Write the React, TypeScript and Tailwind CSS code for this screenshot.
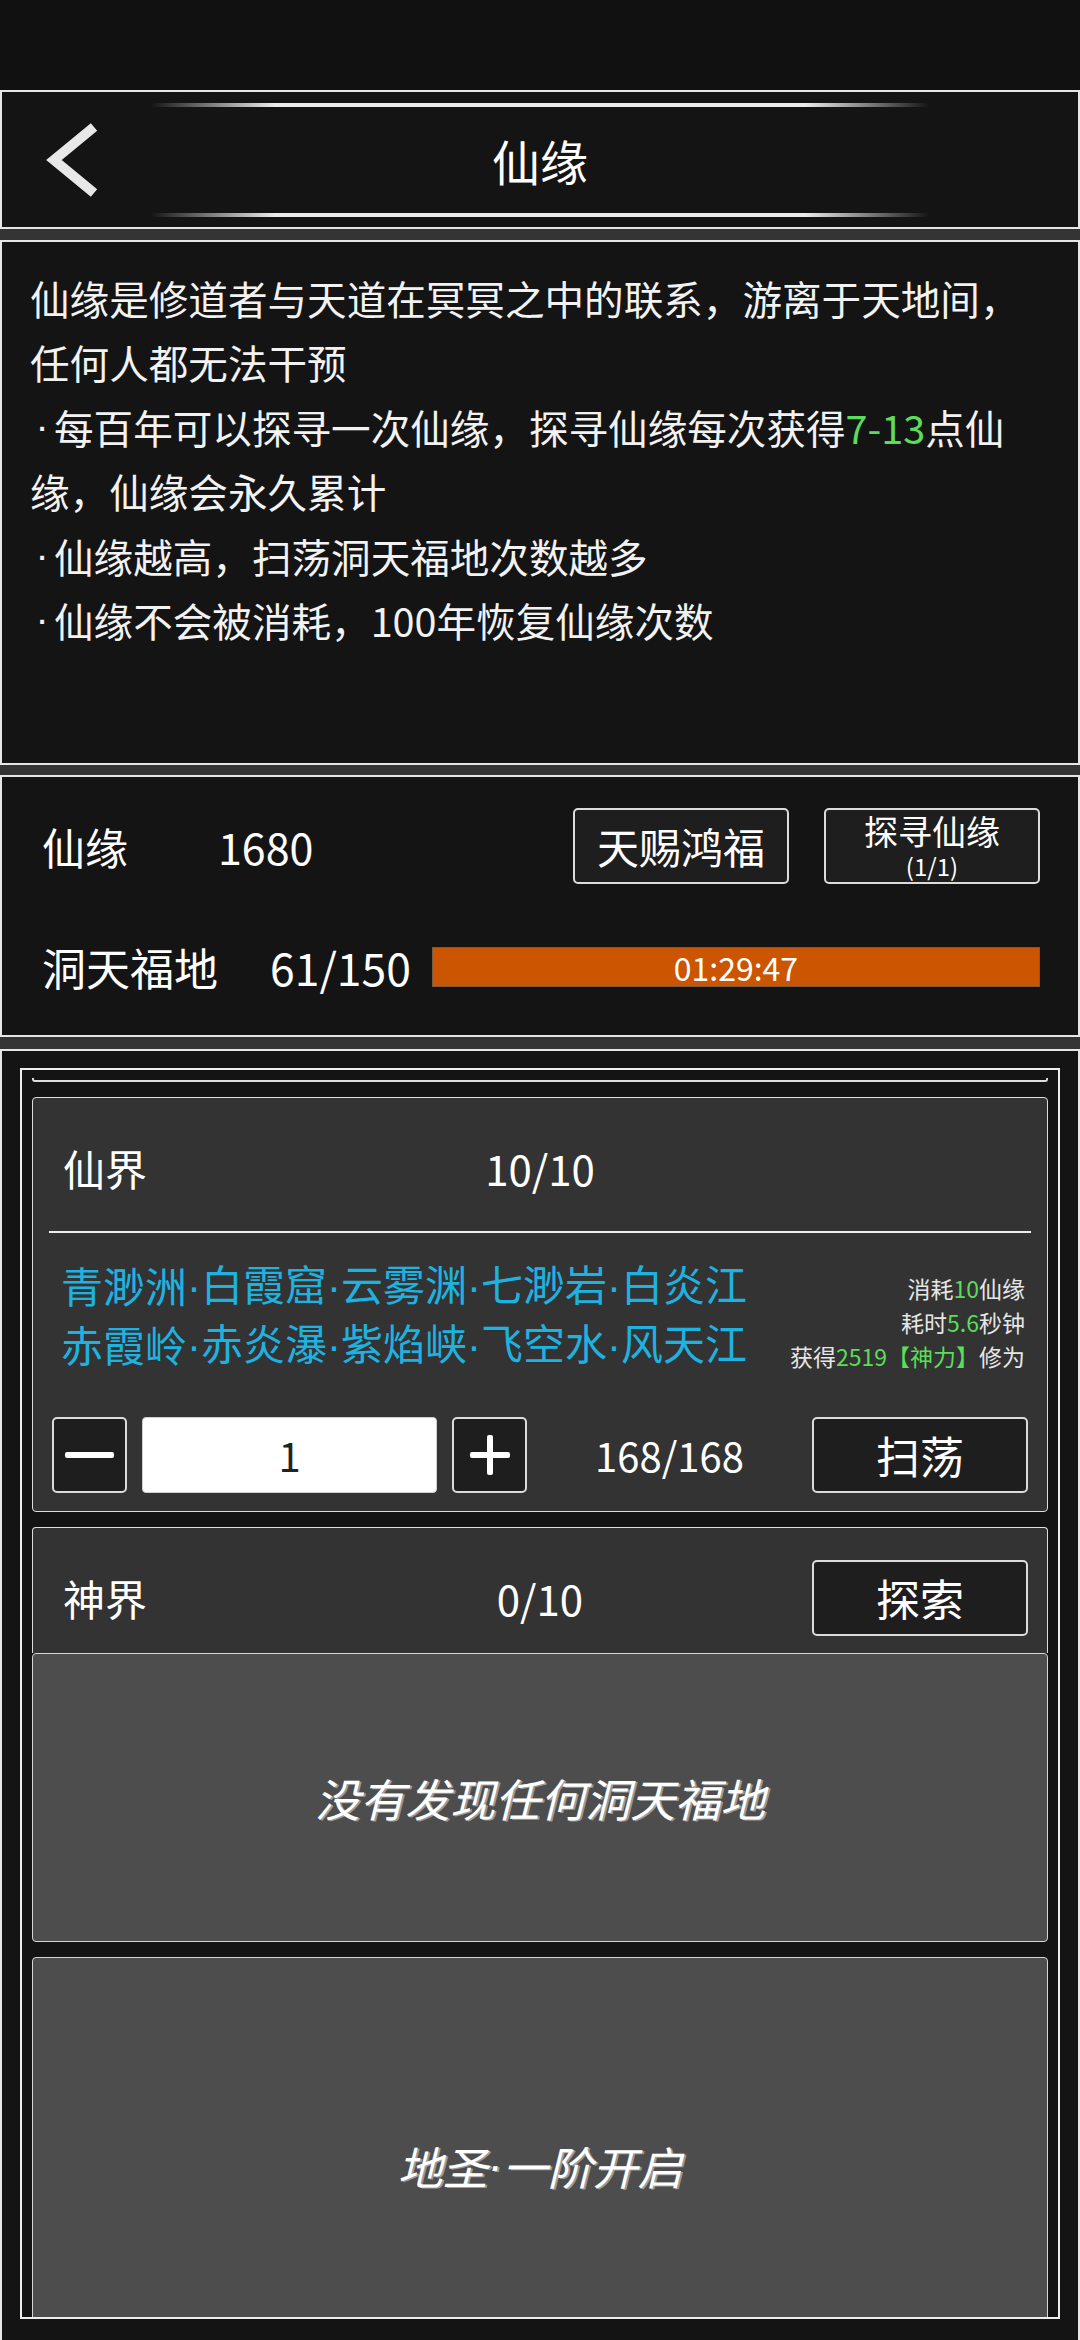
const FONT = "font-['Noto_Sans_CJK_SC','Noto_Sans',sans-serif]";

const BTN =
  "flex items-center justify-center rounded-[5px] border-2 border-[#dcdcdc] bg-[#1e1e1e] text-white";

const ROUTE_LINES = [
  ["青渺洲", "白霞窟", "云雾渊", "七渺岩", "白炎江"],
  ["赤霞岭", "赤炎瀑", "紫焰峡", "飞空水", "风天江"],
];

// narrow middle dot, the CJK font draws it full width
function Dot({ className = "" }: { className?: string }) {
  return <span className={`font-['Liberation_Sans',sans-serif] leading-none ${className}`}>·</span>;
}

function HeaderLine() {
  return (
    <div className="mx-auto h-[4px] w-[780px] shrink-0 rounded-full bg-[linear-gradient(90deg,transparent,#ececec_16%,#ececec_84%,transparent)] blur-[0.4px]" />
  );
}

function Header() {
  return (
    <div className="flex h-[139px] shrink-0 flex-col border-2 border-[#e6e6e6] bg-[#141414] pb-[10px] pt-[11px]">
      <HeaderLine />
      <div className="grid flex-1 grid-cols-[1fr_auto_1fr] items-center">
        <div className="pl-[38px]">
          <svg width="60" height="80" viewBox="0 0 60 80" fill="none">
            <polyline
              points="54,7 14,40 54,73"
              stroke="#e8e8e8"
              strokeWidth="10"
              strokeLinejoin="miter"
            />
          </svg>
        </div>
        <div className="text-[48px] leading-none text-white">仙缘</div>
        <div />
      </div>
      <HeaderLine />
    </div>
  );
}

function Description() {
  const green = "text-[#5ade5a]";
  const bullet = <Dot className="inline-block w-[24px] text-center" />;
  const line = "flex h-[64.6px] items-center whitespace-nowrap";
  return (
    <div className="mt-[11px] h-[525px] shrink-0 border-2 border-[#e6e6e6] bg-[#141414] pl-[28px] pt-[23px] text-[39.6px] leading-none text-[#f2f2f2]">
      <div className={line}>仙缘是修道者与天道在冥冥之中的联系，游离于天地间，</div>
      <div className={line}>任何人都无法干预</div>
      <div className={line}>
        {bullet}每百年可以探寻一次仙缘，探寻仙缘每次获得<span className={green}>7-13</span>点仙
      </div>
      <div className={line}>缘，仙缘会永久累计</div>
      <div className={line}>{bullet}仙缘越高，扫荡洞天福地次数越多</div>
      <div className={line}>{bullet}仙缘不会被消耗，100年恢复仙缘次数</div>
    </div>
  );
}

function Stats() {
  return (
    <div className="mt-[10px] flex h-[262px] shrink-0 flex-col border-2 border-[#e6e6e6] bg-[#141414] pl-[40px] pr-[38px] pt-[31px]">
      <div className="flex h-[76px] items-center">
        <div className="w-[176px] text-[43px] leading-none">仙缘</div>
        <div className="text-[43px] leading-none">1680</div>
        <div className="ml-auto flex gap-[35px]">
          <button className={`${BTN} h-[76px] w-[216px] text-[42px] leading-none`}>天赐鸿福</button>
          <button className={`${BTN} h-[76px] w-[216px] flex-col`}>
            <span className="text-[34px] leading-[36px]">探寻仙缘</span>
            <span className="mt-[4px] text-[24px] leading-[26px]">(1/1)</span>
          </button>
        </div>
      </div>
      <div className="mt-[45px] flex h-[76px] items-center">
        <div className="text-[44px] leading-none">洞天福地</div>
        <div className="ml-[52px] text-[44.5px] leading-none">61/150</div>
        <div className="ml-[21px] flex h-[40px] flex-1 items-center justify-center border border-[#7a5a40] bg-[#cb5500] text-[32px] leading-none">
          01:29:47
        </div>
      </div>
    </div>
  );
}

function XianJie() {
  return (
    <div className="mt-[15px] h-[415px] shrink-0 rounded-[4px] border border-[#dedede] bg-[#333]">
      <div className="mt-[32px] grid h-[76px] grid-cols-3 items-center px-[19px]">
        <div className="pl-[11px] text-[42px] leading-none">仙界</div>
        <div className="justify-self-center text-[42px] leading-none">10/10</div>
        <div />
      </div>
      <div className="mx-[16px] mt-[25px] h-[2px] bg-[#eeeeee]" />
      <div className="mt-[22px] flex items-end justify-between pl-[28px] pr-[22px]">
        <div className="text-[42px] leading-none text-[#1eb2e0]">
          {ROUTE_LINES.map((line) => (
            <div key={line[0]} className="flex h-[59px] items-center whitespace-nowrap">
              {line.map((name, i) => (
                <span key={name}>
                  {i > 0 && <Dot />}
                  {name}
                </span>
              ))}
            </div>
          ))}
        </div>
        <div className="text-right text-[23px] leading-[34px] text-[#e6e6e6]">
          <div>
            消耗<span className="text-[#5ade5a]">10</span>仙缘
          </div>
          <div>
            耗时<span className="text-[#5ade5a]">5.6</span>秒钟
          </div>
          <div className="whitespace-nowrap">
            获得<span className="text-[#5ade5a]">2519【神力】</span>修为
          </div>
        </div>
      </div>
      <div className="mt-[44px] flex h-[76px] items-center px-[19px]">
        <button className={`${BTN} h-[76px] w-[75px]`}>
          <span className="block h-[6px] w-[49px] rounded-[2px] bg-white" />
        </button>
        <div className="ml-[15px] flex h-[76px] w-[295px] items-center justify-center rounded-[4px] border border-[#cfcfcf] bg-white text-[40px] leading-none text-[#222]">
          1
        </div>
        <button className={`${BTN} ml-[15px] h-[76px] w-[75px]`}>
          <svg width="40" height="40" viewBox="0 0 40 40">
            <rect x="0" y="17" width="40" height="6" rx="2" fill="#fff" />
            <rect x="17" y="0" width="6" height="40" rx="2" fill="#fff" />
          </svg>
        </button>
        <div className="flex-1 text-center text-[40px] leading-none">168/168</div>
        <button className={`${BTN} h-[76px] w-[216px] text-[44px] leading-none`}>扫荡</button>
      </div>
    </div>
  );
}

function ShenJie() {
  return (
    <div className="mt-[15px] shrink-0">
      <div className="h-[126px] rounded-t-[4px] border-x border-t border-[#dedede] bg-[#333] pt-[32px]">
        <div className="grid h-[76px] grid-cols-3 items-center px-[19px]">
          <div className="pl-[11px] text-[42px] leading-none">神界</div>
          <div className="justify-self-center text-[42px] leading-none">0/10</div>
          <button className={`${BTN} h-[76px] w-[216px] justify-self-end text-[44px] leading-none`}>
            探索
          </button>
        </div>
      </div>
      <EmptyBox height="h-[289px]">没有发现任何洞天福地</EmptyBox>
    </div>
  );
}

function EmptyBox({ height, children }: { height: string; children: React.ReactNode }) {
  return (
    <div
      className={`flex ${height} shrink-0 items-center justify-center rounded-[4px] border border-[#d6d6d6] bg-[#4d4d4d] text-[45px] italic leading-none text-white [text-shadow:2px_1px_0_#9a9a9a]`}
    >
      {children}
    </div>
  );
}

export default function App() {
  return (
    <div className={`flex h-[2340px] w-[1080px] flex-col overflow-hidden bg-[#343434] text-white ${FONT}`}>
      <div className="h-[90px] shrink-0 bg-[#111]" />
      <Header />
      <Description />
      <Stats />
      <div className="mt-[12px] flex-1 border-2 border-b-0 border-[#e6e6e6] bg-[#141414] px-[18px] pt-[17px]">
        <div className="flex h-[1251px] flex-col overflow-hidden border-2 border-[#eeeeee] px-[10px] pt-[8px]">
          <div className="h-[4px] shrink-0 rounded-b-[3px] border-x-2 border-b-2 border-[#dedede]" />
          <XianJie />
          <ShenJie />
          <div className="mt-[15px] shrink-0">
            <EmptyBox height="h-[416px]">
              地圣<Dot />一阶开启
            </EmptyBox>
          </div>
        </div>
      </div>
    </div>
  );
}
